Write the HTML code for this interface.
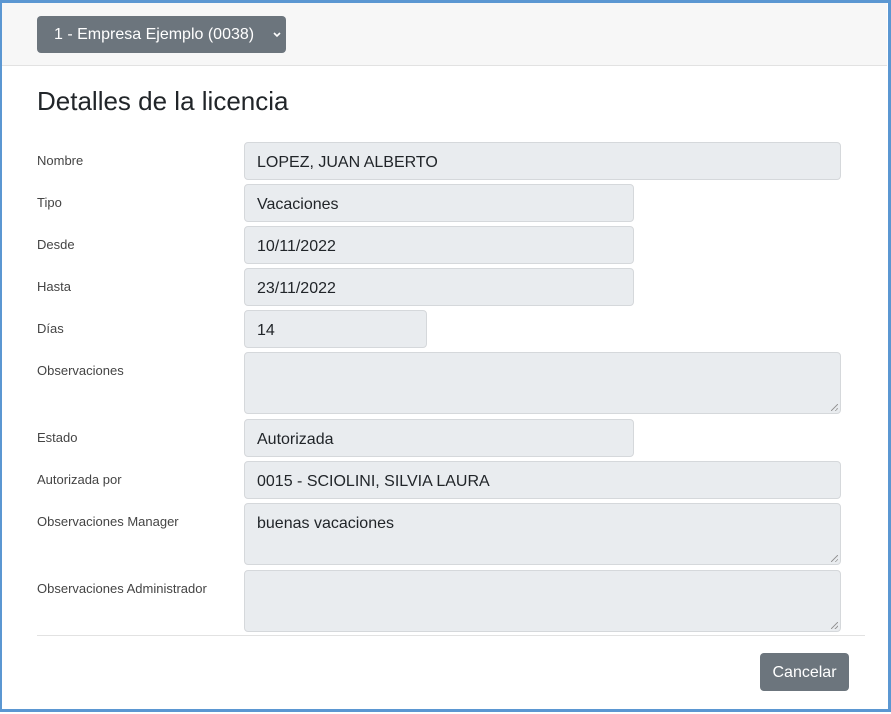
<!DOCTYPE html>
<html><head><meta charset="utf-8"><style>
*{box-sizing:border-box}
body{margin:0;width:891px;height:714px;background:#fff;font-family:"Liberation Sans",Arial,sans-serif;position:relative;overflow:hidden}
.frame{position:absolute;left:0;top:0;width:891px;height:712px;border:solid #5b97d2;border-width:3px 3px 3px 2px}
.hdr{position:absolute;left:2px;top:2px;width:885px;height:64px;background:#f7f7f7;border-bottom:1px solid #e2e2e2}
.sel{position:absolute;left:35px;top:14px;width:249px;height:37px;background:#6c757d;border-radius:4px;color:#fff;font-size:16px;line-height:38px;padding-left:17px}
.sel svg{position:absolute;right:4px;top:15px}
h1{position:absolute;left:37px;top:86px;margin:0;font-weight:400;font-size:26px;color:#212529}
.l{position:absolute;left:37px;font-size:13px;color:#444}
.f{position:absolute;left:244px;height:38px;background:#e9ecef;border:1px solid #d5d8db;border-radius:4px;font-size:16px;color:#212529;padding:10px 12px 6px;line-height:20px}
.t{height:62px}
.t:after{content:"";position:absolute;right:2px;bottom:2px;width:7px;height:7px;background:linear-gradient(135deg,transparent 45%,#999 45%,#999 55%,transparent 55%,transparent 75%,#999 75%,#999 85%,transparent 85%)}
.w1{width:597px}.w2{width:390px}.w3{width:183px}
hr{position:absolute;left:37px;top:635px;width:828px;margin:0;border:0;border-top:1px solid #e2e2e2}
.btn{position:absolute;left:760px;top:653px;width:89px;height:38px;background:#6c757d;border-radius:4px;color:#fff;font-size:16px;text-align:center;line-height:40px}
</style></head><body>
<div class="hdr"><div class="sel">1 - Empresa Ejemplo (0038)<svg width="10" height="8" viewBox="0 0 10 8"><path d="M2 2l3 3 3-3" stroke="#fff" stroke-width="1.6" fill="none"/></svg></div></div>
<h1>Detalles de la licencia</h1>
<div class="l" style="top:153px">Nombre</div><div class="f w1" style="top:142px">LOPEZ, JUAN ALBERTO</div>
<div class="l" style="top:195px">Tipo</div><div class="f w2" style="top:184px">Vacaciones</div>
<div class="l" style="top:237px">Desde</div><div class="f w2" style="top:226px">10/11/2022</div>
<div class="l" style="top:279px">Hasta</div><div class="f w2" style="top:268px">23/11/2022</div>
<div class="l" style="top:321px">Días</div><div class="f w3" style="top:310px">14</div>
<div class="l" style="top:363px">Observaciones</div><div class="f w1 t" style="top:352px"></div>
<div class="l" style="top:430px">Estado</div><div class="f w2" style="top:419px">Autorizada</div>
<div class="l" style="top:472px">Autorizada por</div><div class="f w1" style="top:461px">0015 - SCIOLINI, SILVIA LAURA</div>
<div class="l" style="top:514px">Observaciones Manager</div><div class="f w1 t" style="top:503px">buenas vacaciones</div>
<div class="l" style="top:581px">Observaciones Administrador</div><div class="f w1 t" style="top:570px"></div>
<hr>
<div class="btn">Cancelar</div>
<div class="frame"></div>
</body></html>
